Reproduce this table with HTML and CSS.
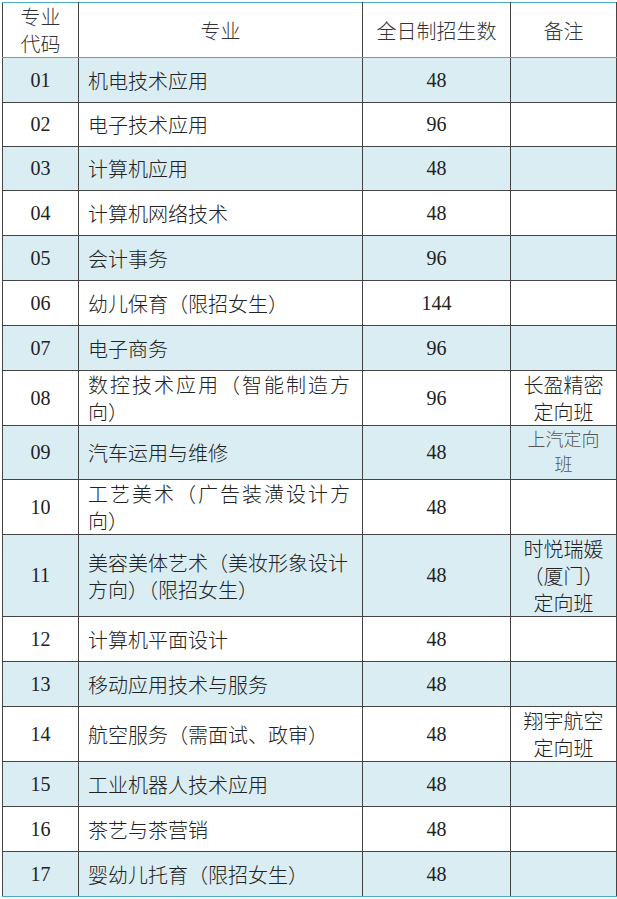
FILE: index.html
```html
<!DOCTYPE html>
<html lang="zh-CN">
<head>
<meta charset="utf-8">
<title>招生专业</title>
<link rel="stylesheet" href="styles.css">
</head>
<body>
<table class="plan">
  <colgroup>
    <col class="c-code"><col class="c-name"><col class="c-num"><col class="c-note">
  </colgroup>
  <thead>
    <tr class="h55">
      <th>专业<br>代码</th>
      <th>专业</th>
      <th>全日制招生数</th>
      <th>备注</th>
    </tr>
  </thead>
  <tbody>
    <tr class="alt h45"><td class="code">01</td><td class="name">机电技术应用</td><td class="num">48</td><td class="note"></td></tr>
    <tr class="h44"><td class="code">02</td><td class="name">电子技术应用</td><td class="num">96</td><td class="note"></td></tr>
    <tr class="alt h44"><td class="code">03</td><td class="name">计算机应用</td><td class="num">48</td><td class="note"></td></tr>
    <tr class="h45"><td class="code">04</td><td class="name">计算机网络技术</td><td class="num">48</td><td class="note"></td></tr>
    <tr class="alt h45"><td class="code">05</td><td class="name">会计事务</td><td class="num">96</td><td class="note"></td></tr>
    <tr class="h45"><td class="code">06</td><td class="name">幼儿保育（限招女生）</td><td class="num">144</td><td class="note"></td></tr>
    <tr class="alt h45"><td class="code">07</td><td class="name">电子商务</td><td class="num">96</td><td class="note"></td></tr>
    <tr class="h55"><td class="code">08</td><td class="name wrap">数控技术应用（智能制造方向）</td><td class="num">96</td><td class="note">长盈精密<br>定向班</td></tr>
    <tr class="alt h54"><td class="code">09</td><td class="name">汽车运用与维修</td><td class="num">48</td><td class="note small">上汽定向<br>班</td></tr>
    <tr class="h55"><td class="code">10</td><td class="name wrap">工艺美术（广告装潢设计方向）</td><td class="num">48</td><td class="note"></td></tr>
    <tr class="alt h82"><td class="code">11</td><td class="name">美容美体艺术（美妆形象设计<br>方向）（限招女生）</td><td class="num">48</td><td class="note">时悦瑞媛<br>（厦门）<br>定向班</td></tr>
    <tr class="h45"><td class="code">12</td><td class="name">计算机平面设计</td><td class="num">48</td><td class="note"></td></tr>
    <tr class="alt h45"><td class="code">13</td><td class="name">移动应用技术与服务</td><td class="num">48</td><td class="note"></td></tr>
    <tr class="h55"><td class="code">14</td><td class="name">航空服务（需面试、政审）</td><td class="num">48</td><td class="note">翔宇航空<br>定向班</td></tr>
    <tr class="alt h45"><td class="code">15</td><td class="name">工业机器人技术应用</td><td class="num">48</td><td class="note"></td></tr>
    <tr class="h45"><td class="code">16</td><td class="name">茶艺与茶营销</td><td class="num">48</td><td class="note"></td></tr>
    <tr class="alt h45"><td class="code">17</td><td class="name">婴幼儿托育（限招女生）</td><td class="num">48</td><td class="note"></td></tr>
  </tbody>
</table>
</body>
</html>
```
FILE: styles.css
```css
html, body {
  margin: 0;
  padding: 0;
  background: #ffffff;
}

body {
  padding: 2px 0 0 2px;
  font-family: "Liberation Serif", "Noto Sans CJK SC", serif;
  color: #222222;
}

.plan {
  border-collapse: collapse;
  table-layout: fixed;
  width: 614px;
  border-top: 1px solid #4bacc6;
  border-bottom: 1px solid #4bacc6;
  border-left: 1px solid #555555;
  border-right: 1px solid #555555;
  font-size: 20px;
  line-height: 27px;
}

.c-code { width: 76px; }
.c-name { width: 284px; }
.c-num { width: 148px; }
.c-note { width: 106px; }

.plan th,
.plan td {
  border: 1px solid #444444;
  padding: 0;
  vertical-align: middle;
  text-align: center;
}

.plan th {
  color: #333333;
  font-family: "Noto Sans CJK SC", sans-serif;
  font-weight: 300;
  border-bottom: 1px solid #4bacc6;
  border-top: 1px solid #4bacc6;
}

.plan tbody tr:first-child td {
  border-top: 1px solid #4bacc6;
}

.plan tbody tr:last-child td {
  border-bottom: 1px solid #4bacc6;
}

.alt td {
  background: #daedf3;
}

.h44 { height: 44px; }
.h45 { height: 45px; }
.h54 { height: 54px; }
.h55 { height: 55px; }
.h82 { height: 82px; }

.code,
.num {
  font-family: "Liberation Serif", serif;
}

.name {
  text-align: left !important;
  padding: 0 12px 0 9px !important;
  font-family: "Noto Sans CJK SC", sans-serif;
  font-weight: 300;
}

.name.wrap {
  text-align: justify !important;
  text-align-last: left;
}

.note {
  font-family: "Noto Sans CJK SC", sans-serif;
  font-weight: 300;
}

.note.small {
  font-size: 18px;
  line-height: 25px;
  color: #555555;
  vertical-align: top;
}
```
